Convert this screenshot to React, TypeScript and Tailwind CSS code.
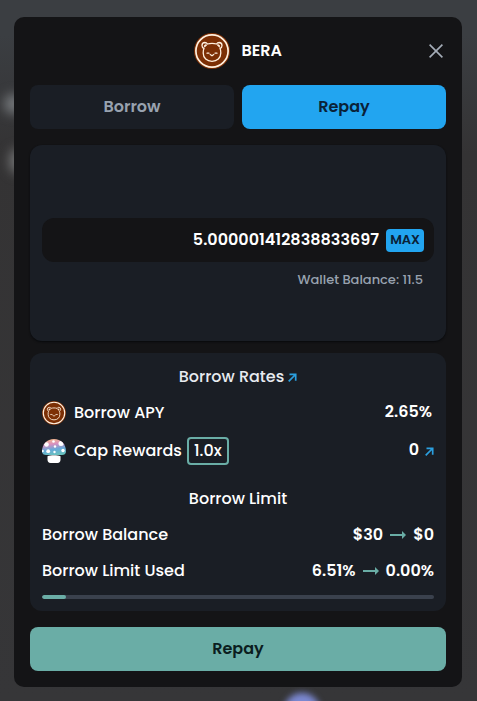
function BearIcon({ className }: { className: string }) {
  return (
    <svg viewBox="0 0 36 36" className={className} fill="none" aria-hidden="true">
      <circle cx="18" cy="18" r="18" fill="#7c2f05" />
      <circle cx="18" cy="18" r="16.100" stroke="#fff0df" strokeWidth="1.700" />
      <path
        d="M13.500 11c-.7-1.100-1.600-1.500-2.600-1.500a3 3 0 0 0-2.900 3c0 1.400.7 2.400 1.900 2.900-.6 1.400-.7 2.600-.7 4.600 0 5 3.700 8.300 8.800 8.300s8.800-3.300 8.800-8.300c0-2-.1-3.200-.7-4.600 1.200-.5 1.900-1.500 1.900-2.900a3 3 0 0 0-2.900-3c-1 0-1.900.4-2.600 1.500-1.300-.4-2.800-.6-4.500-.6s-3.200.2-4.500.6Z"
        stroke="#fff0df"
        strokeWidth="1.300"
      />
      <path d="M10.500 14.200c-.8-1.700.8-3.200 2.300-2.300ZM25.500 14.200c.8-1.700-.8-3.200-2.300-2.300Z" fill="#fff0df" stroke="#fff0df" strokeWidth="0.800" />
      <path d="M13 20.200h2M21 20.200h2M16.200 21.500l1.800 1.200 1.800-1.200" stroke="#fff0df" strokeWidth="1.200" strokeLinecap="round" />
    </svg>
  );
}

function MushroomIcon() {
  return (
    <svg viewBox="0 0 24 24" className="size-6" aria-hidden="true">
      <defs>
        <linearGradient id="cap" x1="0.4" y1="0" x2="0.6" y2="1">
          <stop offset="0" stopColor="#f3b88d" />
          <stop offset="0.3" stopColor="#d88fc0" />
          <stop offset="0.6" stopColor="#68a9d8" />
          <stop offset="1" stopColor="#67c6ba" />
        </linearGradient>
        <clipPath id="capClip">
          <path d="M0 12.500C0 5 5 0 12 0s12 5 12 12.500c0 2.500-2 3.500-4 3.500H4c-2 0-4-1-4-3.500Z" />
        </clipPath>
      </defs>
      <g clipPath="url(#capClip)">
        <path fill="url(#cap)" d="M0 0h24v17H0z" />
        <g fill="#fff">
          <circle cx="4.500" cy="5.500" r="2.300" />
          <circle cx="11.500" cy="2.500" r="1.300" />
          <circle cx="19" cy="4.500" r="2.500" />
          <circle cx="6.200" cy="12.200" r="1.900" />
          <circle cx="13" cy="7.500" r="1.200" />
          <circle cx="21" cy="11.500" r="1.700" />
          <circle cx="0.500" cy="12" r="1.300" />
          <circle cx="12.500" cy="13" r="1.200" />
        </g>
      </g>
      <path d="M5.500 17.200c3-1.200 10-1.200 13 0v3.600c0 2-1 3.200-3 3.200h-7c-2 0-3-1.200-3-3.200Z" fill="#fff" />
    </svg>
  );
}

function LinkArrow() {
  return (
    <svg viewBox="0 0 9 9" className="size-[9px] shrink-0" fill="none" stroke="#2b9fdf" strokeWidth="1.700" aria-hidden="true">
      <path d="M1.500 1.300h6.200v6.400M7.500 1.500.7 8.300" />
    </svg>
  );
}

function ChangeArrow() {
  return (
    <svg viewBox="0 0 16 10" className="h-2.5 w-4 shrink-0" aria-hidden="true">
      <path d="M0 4h12V1l4 4-4 4V6H0Z" fill="#6aada6" />
    </svg>
  );
}

export default function App() {
  return (
    <div className="relative isolate h-[701px] w-[477px] overflow-hidden bg-linear-to-b from-[#3b3e42] from-5% via-[#343334] via-22% to-[#363638] px-[14px] pt-[17px] font-['Poppins','Inter',sans-serif] text-base text-white">
      <div className="absolute top-[94px] left-1 -z-10 h-5 w-5 rounded-full bg-[#777a7d] blur-[6px]" />
      <div className="absolute top-[149px] left-2.5 -z-10 h-6 w-4 rounded-full bg-[#777879] blur-[6px]" />
      <div className="absolute top-[693px] left-[284px] -z-10 size-9 rounded-full bg-[#7b88d2] blur-[3px]" />
      <main className="h-[670px] w-[448px] rounded-[10px] bg-[#141416] px-4">
        <header className="grid h-17 grid-cols-[1fr_auto_1fr] items-center">
          <span />
          <div className="flex items-center gap-3">
            <BearIcon className="size-9" />
            <h1 className="w-[41px] font-semibold">BERA</h1>
          </div>
          <button className="mr-[3px] justify-self-end" aria-label="Close">
            <svg viewBox="0 0 14 14" className="size-3.5" fill="none" stroke="#a5adb8" strokeWidth="1.600">
              <path d="m.6.6 12.800 12.800M13.400.6.6 13.400" />
            </svg>
          </button>
        </header>
        <nav className="grid grid-cols-2 gap-2 font-semibold">
          <button className="h-11 rounded-lg bg-[#1a1e25] text-[#98a2af]">Borrow</button>
          <button className="h-11 rounded-lg bg-[#22a5f0] text-[#0a2238]">Repay</button>
        </nav>

        <section className="mt-4 h-49 rounded-xl bg-[#1a1e25] px-3 pt-[73px] shadow-[0_1px_2px_#08090c]">
          <div className="flex h-11 items-center justify-end gap-[7px] rounded-xl bg-[#141416] pr-2.5">
            <span className="font-semibold">5.000001412838833697</span>
            <button className="h-[23px] w-[38px] rounded bg-[#22a5f0] text-[13px] font-semibold tracking-[-0.2px] text-[#0a2238]">MAX</button>
          </div>
          <p className="mt-2 pr-[11px] text-right text-[13px] leading-5 font-medium text-[#98a2af]">Wallet Balance: 11.5</p>
        </section>

        <section className="mt-3 h-[258px] rounded-xl bg-[#1a1e25] px-3 pt-3 font-medium">
          <h2 className="flex h-6 items-center justify-center gap-1 text-[#e8ebf0]">
            Borrow Rates <LinkArrow />
          </h2>
          <div className="mt-3 flex h-6 items-center justify-between">
            <div className="flex items-center gap-2">
              <BearIcon className="size-6" />
              <span>Borrow APY</span>
            </div>
            <span className="pr-0.5 pb-0.5 font-semibold">2.65%</span>
          </div>
          <div className="mt-3 flex h-7 items-center justify-between">
            <div className="flex items-center">
              <MushroomIcon />
              <span className="ml-2">Cap Rewards</span>
              <span className="ml-[5px] flex h-7 w-[42px] items-center justify-center rounded border-2 border-[#6aada6]">1.0x</span>
            </div>
            <div className="flex items-center gap-1.5 font-semibold">
              <span className="pb-0.5">0</span> <LinkArrow />
            </div>
          </div>
          <h2 className="mt-[22px] h-6 text-center leading-6">Borrow Limit</h2>
          <div className="mt-3 flex h-6 items-center justify-between">
            <span>Borrow Balance</span>
            <div className="flex items-center gap-[7px] font-semibold">
              <span>$30</span>
              <ChangeArrow />
              <span>$0</span>
            </div>
          </div>
          <div className="mt-3 flex h-6 items-center justify-between">
            <span>Borrow Limit Used</span>
            <div className="flex items-center gap-[7px] font-semibold">
              <span>6.51%</span>
              <ChangeArrow />
              <span>0.00%</span>
            </div>
          </div>
          <div className="mt-3 h-1 overflow-hidden rounded-full bg-[#3a414d]">
            <div className="h-full w-6 rounded-full bg-[#6aada6]" />
          </div>
        </section>

        <button className="mt-4 h-11 w-full rounded-lg bg-[#6aada6] font-semibold text-[#0b1d20]">Repay</button>
      </main>
    </div>
  );
}
